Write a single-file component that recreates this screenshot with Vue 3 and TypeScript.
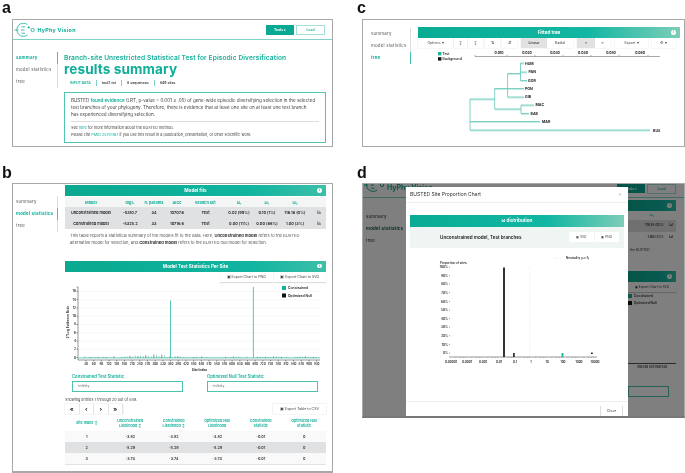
<template>
  <div class="figure">
    <!-- a: summary page -->
    <section class="cell">
      <h2 class="letter top">a</h2>
      <div class="panel panel-a">
        <header class="site-head">
          <svg class="logo" viewBox="13 22 23 14">
            <path d="M26.5 23.6A6.6 6.6 0 1 0 26.5 34" />
            <path d="M13.5 29H17.5M20.5 25.8H24M20 29H23.5M20.5 32.2H24M26.5 26.4H29M27.7 25.2V27.6" />
            <circle cx="31.6" cy="29" r="1.7" />
          </svg>
          <span class="brand">HyPhy Vision</span>
          <button class="btn-tools">Tools ▾</button>
          <button class="btn-load">Load</button>
        </header>
        <div class="page-body">
          <ul class="nav nav-a">
            <li v-for="(item, i) in navItems" :key="item" :class="{ active: i === 0 }">{{ item }}</li>
          </ul>
          <div class="summary">
            <div class="subtitle">Branch-site Unrestricted Statistical Test for Episodic Diversification</div>
            <div class="results-title">results summary</div>
            <div class="input-row">
              <span class="input-key">INPUT DATA</span>
              <span>test2.txt</span>
              <span>8 sequences</span>
              <span>849 sites</span>
            </div>
            <div class="evidence">
              <p class="evidence-main">
                BUSTED <b>found evidence</b> (LRT, p-value = 0.001 ≤ .05) of gene-wide episodic diversifying selection in the selected<br />
                test branches of your phylogeny. Therefore, there is evidence that at least one site on at least one test branch<br />
                has experienced diversifying selection.
              </p>
              <p class="evidence-note">
                See <i>here</i> for more information about the BUSTED method.<br />
                Please cite <i>PMID 25701167</i> if you use this result in a publication, presentation, or other scientific work.
              </p>
            </div>
          </div>
        </div>
      </div>
    </section>

    <!-- c: fitted tree -->
    <section class="cell">
      <h2 class="letter top letter-right">c</h2>
      <div class="panel panel-c">
        <ul class="nav nav-c">
          <li v-for="(item, i) in navItems" :key="item" :class="{ active: i === 2 }">{{ item }}</li>
        </ul>
        <div class="tree-main">
          <div class="bar bar-fade">Fitted tree<span class="info">i</span></div>
          <div class="toolbar">
            <button
              v-for="tool in treeTools"
              :key="tool.label + tool.w"
              :class="{ on: tool.on }"
              :style="{ width: tool.w + 'px', marginRight: tool.gap + 'px' }"
            >{{ tool.label }}</button>
          </div>
          <svg class="tree" viewBox="418 48 262 92">
            <rect x="438" y="52" width="3.4" height="3.4" fill="#1db5a0" />
            <rect x="438" y="57.2" width="3.4" height="3.4" fill="#111" />
            <text x="442.5" y="55.2" class="tree-small">Test</text>
            <text x="442.5" y="60.4" class="tree-small">Background</text>
            <path d="M475 55V56.5H660" class="tree-axis" />
            <g v-for="t in treeAxis" :key="t.label">
              <path :d="`M${t.x} 55V56.5`" class="tree-axis" />
              <text :x="t.x - 8" y="54" text-anchor="middle" class="tree-tick">{{ t.label }}</text>
            </g>
            <path v-for="b in treeBranches" :key="b" :d="b" class="branch-pale" />
            <path v-for="b in treeBranches" :key="'t' + b" :d="b" class="branch" />
            <path d="M470 99V130M494.7 88.5V109M507.6 73.5V97M520.5 63V80.5M521 105V113.5" class="branch" />
            <text v-for="l in treeLeaves" :key="l.name" :x="l.x" :y="l.y" class="leaf">{{ l.name }}</text>
          </svg>
        </div>
      </div>
    </section>

    <!-- b: model statistics -->
    <section class="cell">
      <h2 class="letter low">b</h2>
      <div class="panel panel-b">
        <ul class="nav nav-b">
          <li v-for="(item, i) in navItems" :key="item" :class="{ active: i === 1 }">{{ item }}</li>
        </ul>
        <div class="stats">
          <div class="bar">Model fits<span class="info">i</span></div>
          <table class="fit">
            <colgroup>
              <col v-for="w in fitWidths" :key="w.id" :style="{ width: w.px + 'px' }" />
            </colgroup>
            <thead>
              <tr><th v-for="h in fitHead" :key="h">{{ h }}</th><th></th></tr>
            </thead>
            <tbody>
              <tr v-for="row in fitRows" :key="row[0]">
                <td v-for="(c, i) in row" :key="i">{{ c }}</td>
                <td><svg class="mini" viewBox="0 0 6 5"><path d="M.5 0V4.5H6M2 3.8V2M3.5 3.8V1M5 3.8V2.5" /></svg></td>
              </tr>
            </tbody>
          </table>
          <p class="fit-note">
            This table reports a statistical summary of the models fit to the data. Here, <b>Unconstrained model</b> refers to the BUSTED<br />
            alternative model for selection, and <b>Constrained model</b> refers to the BUSTED null model for selection.
          </p>
          <div class="bar bar-second">Model Test Statistics Per Site<span class="info">i</span></div>
          <div class="export-row">
            <button>▣ Export Chart to PNG</button>
            <button>▣ Export Chart to SVG</button>
          </div>
          <svg class="site-chart" viewBox="65 283 261 90">
            <line v-for="t in yTicks" :key="t.label" x1="79" x2="320" :y1="t.y" :y2="t.y" class="grid-line" />
            <path d="M76.5 287H78V360H320" class="chart-axis" />
            <g v-for="t in yTicks" :key="'l' + t.label">
              <path :d="`M76.5 ${t.y}H78`" class="chart-axis" />
              <text x="76" :y="t.y + 1" text-anchor="end" class="chart-tick">{{ t.label }}</text>
            </g>
            <text x="0" y="0" transform="translate(69 322) rotate(-90)" text-anchor="middle" class="chart-tick">2*Log Evidence Ratio</text>
            <rect x="78" y="357.2" width="242" height="1.3" fill="#8ed8cb" />
            <path v-for="n in noiseBars" :key="n.x" :d="`M${n.x} 358V${n.top}`" :stroke="n.dark ? '#222' : '#18ab97'" stroke-width=".5" />
            <path d="M170.5 358V300.5M253.4 358V287" class="big-bar" />
            <rect x="282" y="286" width="4" height="4" fill="#18b19c" />
            <rect x="282" y="293.5" width="4" height="4" fill="#111" />
            <text x="288" y="289" class="chart-legend">Constrained</text>
            <text x="288" y="296.5" class="chart-legend">Optimized Null</text>
            <g v-for="t in xTicks" :key="t.label">
              <path :d="`M${t.x} 360V361.5`" class="chart-axis" />
              <text :x="t.x" y="365" text-anchor="middle" class="chart-tick x-label">{{ t.label }}</text>
            </g>
            <text x="199.5" y="371" text-anchor="middle" class="chart-tick strong">Site Index</text>
          </svg>
          <div class="stat-inputs">
            <label>Constrained Test Statistic<span class="field">-infinity</span></label>
            <label>Optimized Null Test Statistic<span class="field">-infinity</span></label>
          </div>
          <div class="entries">Showing entries 1 through 20 out of 849.</div>
          <div class="pager-row">
            <div class="pager">
              <button>«</button><button>‹</button><button>›</button><button>»</button>
            </div>
            <button class="csv">▣ Export Table to CSV</button>
          </div>
          <table class="sites">
            <thead>
              <tr><th v-for="h in siteHead" :key="h">{{ h }}</th></tr>
            </thead>
            <tbody>
              <tr v-for="row in siteRows" :key="row[0]">
                <td v-for="(c, i) in row" :key="i">{{ c }}</td>
              </tr>
            </tbody>
          </table>
        </div>
      </div>
    </section>

    <!-- d: site proportion modal -->
    <section class="cell">
      <h2 class="letter low letter-right">d</h2>
      <div class="panel panel-d">
        <div class="under">
          <header class="under-head">
            <svg class="logo-d" viewBox="13 22 23 14">
              <path d="M26.5 23.6A6.6 6.6 0 1 0 26.5 34" />
              <path d="M13.5 29H17.5M20.5 25.8H24M20 29H23.5M20.5 32.2H24M26.5 26.4H29M27.7 25.2V27.6" />
              <circle cx="31.6" cy="29" r="1.7" />
            </svg>
            <span class="brand-d">HyPhy Vision</span>
            <button class="btn-tools">Tools ▾</button>
            <button class="btn-load">Load</button>
          </header>
          <div class="under-body">
            <ul class="nav nav-d">
              <li v-for="(item, i) in navItems" :key="item" :class="{ active: i === 1 }">{{ item }}</li>
            </ul>
            <div class="under-right">
              <div class="bar"><span class="info">i</span></div>
              <div class="under-omega">ω₃</div>
              <div class="under-row grey">116.18 (0%) <span>lal</span></div>
              <div class="under-row">1.00 (3%) <span>lal</span></div>
              <div class="under-text">the BUSTED</div>
              <div class="bar under-second"><span class="info">i</span></div>
              <div class="under-export">▣ Export Chart to SVG</div>
              <div class="under-legend"><i></i>Constrained</div>
              <div class="under-legend"><i class="dark"></i>Optimized Null</div>
              <div class="under-axis">810 840 870 900 930</div>
              <div class="under-field"></div>
            </div>
          </div>
        </div>
        <div class="backdrop"></div>
        <div class="modal">
          <div class="modal-head">BUSTED Site Proportion Chart<span class="close-x">×</span></div>
          <div class="bar bar-fade modal-bar">ω distribution</div>
          <div class="modal-strip">
            <span>Unconstrained model, Test branches</span>
            <div class="strip-btns">
              <button>▣ SVG</button>
              <button>▣ PNG</button>
            </div>
          </div>
          <svg class="omega-chart" viewBox="410 247 214 153">
            <path d="M529.7 266V356" class="neutral" />
            <path d="M555 257H562" class="neutral" />
            <text x="566" y="258.4" class="omega-text">Neutrality (ω=1)</text>
            <text x="440" y="262.6" class="omega-text">Proportion of sites</text>
            <g v-for="t in percentTicks" :key="t.label">
              <text x="448" :y="t.y + 1.2" text-anchor="end" class="omega-text">{{ t.label }}</text>
              <path :d="`M449 ${t.y}H450`" class="omega-axis" />
            </g>
            <path d="M449 356H597" class="omega-axis" />
            <path v-for="x in minorTicks" :key="x" :d="`M${x} 356V357`" class="omega-axis thin" />
            <text v-for="t in logTicks" :key="t.label" :x="t.x" y="361.8" text-anchor="middle" class="omega-text">{{ t.label }}</text>
            <rect x="503" y="266.5" width="2" height="89.5" fill="#333" />
            <rect x="513" y="352" width="1.8" height="4" fill="#333" />
            <rect x="561.6" y="352" width="1.8" height="4" fill="#13b09b" />
            <rect x="591" y="351.6" width="1.8" height="1.4" fill="#222" />
          </svg>
          <div class="modal-foot"><button>Close</button></div>
        </div>
      </div>
    </section>
  </div>
</template>

<script setup lang="ts">
interface Tick {
  label: string;
  x: number;
}

const navItems = ['summary', 'model statistics', 'tree'];

const treeTools = [
  { label: 'Options ▾', w: 35, gap: 1 },
  { label: '↕', w: 13, gap: 1 },
  { label: '↕', w: 15, gap: 2 },
  { label: '⇅', w: 15, gap: 2 },
  { label: '⇵', w: 15, gap: 4 },
  { label: 'Linear', w: 26, gap: 0, on: true },
  { label: 'Radial', w: 26, gap: 4 },
  { label: '≡', w: 18, gap: 0, on: true },
  { label: '≡', w: 15, gap: 5 },
  { label: 'Export ▾', w: 33, gap: 4 },
  { label: '⚙ ▾', w: 24, gap: 0 },
];

const treeAxis: Tick[] = [
  { label: '0.010', x: 507 },
  { label: '0.020', x: 535 },
  { label: '0.030', x: 563 },
  { label: '0.040', x: 591 },
  { label: '0.050', x: 619 },
  { label: '0.060', x: 648 },
];

const treeBranches = [
  'M470 99H494.7',
  'M470 121.5H540',
  'M470 130H650',
  'M494.7 88.5H507.6',
  'M494.7 109H521',
  'M507.6 73.5H520.5',
  'M507.6 88.5H524',
  'M507.6 97H524',
  'M520.5 63H524',
  'M520.5 72H527',
  'M520.5 80.5H527',
  'M521 105H534',
  'M521 113.5H529',
];

const treeLeaves = [
  { name: 'HUM', x: 525, y: 64.8 },
  { name: 'PAN', x: 528.5, y: 73.3 },
  { name: 'GOR', x: 528, y: 81.8 },
  { name: 'PON', x: 525, y: 89.8 },
  { name: 'GIB', x: 525, y: 98.3 },
  { name: 'MAC', x: 535.5, y: 106.3 },
  { name: 'BAB', x: 530.5, y: 114.8 },
  { name: 'MAR', x: 542, y: 123.3 },
  { name: 'BUS', x: 653, y: 131.5 },
];

const fitWidths = [52, 26, 22, 24, 33, 34, 22, 34, 14].map((px, id) => ({ id, px }));
const fitHead = ['Model', 'log L', 'n. params', 'AICc', 'Branch set', 'ω₁', 'ω₂', 'ω₃'];
const fitRows = [
  ['Unconstrained model', '-5310.7', '34', '10707.6', 'Test', '0.02 (99%)', '0.10 (1%)', '116.18 (0%)'],
  ['Constrained model', '-5325.2', '33', '10716.6', 'Test', '0.00 (11%)', '0.00 (86%)', '1.00 (3%)'],
];

const yTicks = [16, 14, 12, 10, 8, 6, 4, 2, 0].map((v) => ({
  label: String(v),
  y: 357.5 - v * 4.13,
}));

const xTicks: Tick[] = Array.from({ length: 31 }, (_, i) => ({
  label: String((i + 1) * 30),
  x: 86 + i * 7.69,
}));

// small spikes along the baseline, fixed so that every run draws the same chart
const noiseBars = Array.from({ length: 90 }, (_, i) => {
  const wave = Math.abs(Math.sin(i * 12.9898) * 43758.5453) % 1;
  const x = Math.round((82 + i * 2.66) * 10) / 10;
  const tall = x > 126 && x < 176 ? 3.4 : 1.8;
  return { x, top: 358 - wave * tall, dark: i % 3 === 0 };
});

const siteHead = [
  'Site Index ↕',
  'Unconstrained Likelihood ↕',
  'Constrained Likelihood ↕',
  'Optimized Null Likelihood',
  'Constrained Statistic',
  'Optimized Null Statistic',
];
const siteRows = [
  ['1', '-3.82', '-3.82', '-3.82', '-0.01', '0'],
  ['2', '-5.29', '-5.29', '-5.29', '-0.01', '0'],
  ['3', '-3.74', '-3.74', '-3.74', '-0.01', '0'],
];

const percentTicks = [100, 90, 80, 70, 60, 50, 40, 30, 20, 10, 0].map((v) => ({
  label: v + '%',
  y: 352 - v * 0.86,
}));

const logTicks: Tick[] = ['0.00001', '0.0001', '0.001', '0.01', '0.1', '1', '10', '100', '1000', '10000'].map(
  (label, i) => ({ label, x: 451 + i * 16 }),
);

const minorTicks = Array.from({ length: 9 }, (_, d) => d)
  .flatMap((d) => [0.3, 0.48, 0.6, 0.7, 0.78, 0.85, 0.9, 0.95].map((f) => 451 + (d + f) * 16))
  .filter((_, i) => i % 2 === 0);
</script>

<style>
html,
body {
  margin: 0;
  background: #fff;
}
</style>

<style scoped>
.figure {
  width: 685px;
  height: 473px;
  display: grid;
  grid-template-columns: 333px 352px;
  grid-template-rows: 147px 326px;
  overflow: hidden;
  font-family: Inter, "Liberation Sans", sans-serif;
  color: #333;
  background: #fff;
  filter: blur(0.4px);
}
.cell {
  display: flex;
  flex-direction: column;
  min-width: 0;
}
.letter {
  margin: 0;
  font: bold 16px/1 "Liberation Sans", Arial, sans-serif;
  color: #111;
  display: flex;
  align-items: flex-end;
  padding-left: 2px;
}
.letter.top {
  height: 19px;
  padding-bottom: 3px;
  box-sizing: border-box;
}
.letter.low {
  height: 36px;
  padding-bottom: 2px;
  box-sizing: border-box;
}
.letter-right {
  padding-left: 24px;
}
.panel {
  box-sizing: border-box;
  border: 1px solid #a8a8a8;
  background: #fff;
  overflow: hidden;
  position: relative;
  margin-left: 12px;
}
.panel-a {
  height: 128px;
}
.panel-c {
  height: 128px;
  margin-left: 29px;
  display: flex;
  padding-top: 7px;
}
.panel-b {
  height: 290px;
  display: flex;
  border-bottom-width: 2px;
}
.panel-d {
  height: 235px;
  margin-left: 29px;
  background: #fff;
  border-bottom: 2px solid #777;
}

/* site header */
.site-head {
  height: 19px;
  border-bottom: 1px solid #7fd2c5;
  display: flex;
  align-items: center;
  padding: 0 7px 0 1px;
}
.logo,
.logo-d {
  width: 23px;
  height: 14px;
  fill: none;
  stroke: #13ae99;
  stroke-width: 0.8;
}
.brand {
  font-size: 5.4px;
  font-weight: 700;
  color: #13ae99;
  letter-spacing: 0.25px;
  margin-right: auto;
  margin-left: 0.5px;
}
button {
  font-family: inherit;
  padding: 0;
  border: 0;
  background: #fff;
  color: #444;
  font-size: 3.4px;
  cursor: pointer;
}
.btn-tools {
  width: 28px;
  height: 10px;
  background: #09a892;
  color: #fff;
  font-weight: 700;
  margin-right: 2px;
}
.btn-load {
  width: 29px;
  height: 10px;
  border: 1px solid #a5e0d6;
  color: #13ae99;
  font-weight: 600;
  box-sizing: border-box;
}

/* side navigation */
.nav {
  list-style: none;
  margin: 0;
  padding: 0;
  flex: none;
  font-size: 4.35px;
  letter-spacing: 0.22px;
  color: #555;
}
.nav li {
  height: 12px;
  line-height: 12px;
  padding-left: 3px;
  border-right: 1px solid #ddd;
  white-space: nowrap;
}
.nav li.active {
  color: #0fae98;
  font-weight: 700;
  border-right-color: #43c1ad;
}
.nav-a {
  width: 45px;
  margin-top: 12px;
}
.nav-b {
  width: 45px;
  margin-top: 12px;
}
.nav-c {
  width: 48px;
  padding-left: 5px;
  box-sizing: border-box;
  margin-top: 1px;
}
.nav-d {
  width: 40px;
  margin-top: 13px;
  color: #222;
}
.nav-d li {
  border-right: 0;
}
.nav-d li.active {
  color: #0a5a4e;
}

/* panel a */
.page-body {
  display: flex;
}
.summary {
  margin-left: 6px;
  width: 262px;
  padding-top: 14px;
}
.subtitle {
  font-size: 6.6px;
  line-height: 8px;
  font-weight: 600;
  color: #16b09b;
  letter-spacing: 0.11px;
  white-space: nowrap;
}
.results-title {
  font-size: 13.6px;
  line-height: 14px;
  font-weight: 700;
  color: #0fae98;
  letter-spacing: 0.1px;
}
.input-row {
  display: flex;
  margin-top: 4px;
  padding-left: 6px;
  font-size: 3.5px;
  line-height: 6px;
  font-weight: 600;
  color: #333;
}
.input-row span {
  padding-right: 5px;
  margin-right: 5px;
  border-right: 1px solid #7fd2c5;
}
.input-row span:last-child {
  border-right: 0;
}
.input-key {
  color: #13ae99;
}
.evidence {
  box-sizing: border-box;
  height: 51px;
  margin-top: 6px;
  border: 1px solid #53c4b2;
  padding: 5px 6px;
  font-size: 4.55px;
  color: #444;
  white-space: nowrap;
}
.evidence-main {
  margin: 0;
  line-height: 6.8px;
  padding-bottom: 2.2px;
  border-bottom: 1px solid #ddd;
}
.evidence-main b {
  color: #13ae99;
  font-weight: 600;
}
.evidence-note {
  margin: 3.5px 0 0;
  font-size: 3.75px;
  line-height: 6.8px;
}
.evidence-note i {
  color: #13ae99;
  font-style: normal;
}

/* teal bars */
.bar {
  position: relative;
  height: 11px;
  line-height: 11px;
  text-align: center;
  color: #fff;
  font-size: 4.6px;
  font-weight: 700;
  background: linear-gradient(90deg, #0aa98f 0%, #10b4a0 70%, #3cbfa9 100%);
}
.bar-fade {
  background: linear-gradient(90deg, #09ab93 0%, #12b7a3 65%, #7dcdb8 100%);
}
.info {
  position: absolute;
  right: 4px;
  top: 3px;
  width: 4.6px;
  height: 4.6px;
  border-radius: 50%;
  background: #fff;
  color: #2bb29e;
  font-size: 3.4px;
  line-height: 4.6px;
  text-align: center;
}

/* panel b */
.stats {
  width: 261px;
  margin-left: 7px;
  padding-top: 1px;
}
.fit {
  width: 261px;
  table-layout: fixed;
  border-collapse: collapse;
  font-size: 3.9px;
  text-align: center;
  margin-top: 1px;
  color: #222;
}
.fit th {
  height: 10px;
  padding: 0;
  color: #13ae99;
  font-weight: 700;
  background: #f4f5f5;
}
.fit td {
  height: 11px;
  padding: 0;
  font-weight: 600;
  background: #e0e1e2;
  white-space: nowrap;
}
.mini {
  width: 4.5px;
  height: 4px;
  fill: none;
  stroke: #333;
  stroke-width: 0.6;
}
.fit-note {
  margin: 4px 0 0 5px;
  font-size: 4.1px;
  line-height: 6.8px;
  color: #555;
  white-space: nowrap;
}
.fit-note b {
  font-weight: 700;
  color: #333;
}
.bar-second {
  margin-top: 14px;
}
.export-row {
  display: flex;
  justify-content: flex-end;
  height: 10px;
}
.export-row button {
  width: 52.5px;
  height: 10px;
  margin-left: 1px;
  box-shadow: 0 1px 1px #ddd;
  font-size: 3.6px;
}
.site-chart {
  display: block;
  width: 261px;
  height: 90px;
  margin-top: 1px;
}
.grid-line {
  stroke: #f1f1f1;
  stroke-width: 0.5;
}
.chart-axis {
  fill: none;
  stroke: #333;
  stroke-width: 0.5;
}
.chart-tick {
  font-size: 3.2px;
  font-weight: 600;
  fill: #222;
}
.x-label {
  font-size: 2.9px;
}
.strong {
  font-weight: 700;
}
.big-bar {
  fill: none;
  stroke: #2ab9a5;
  stroke-width: 0.8;
}
.chart-legend {
  font-size: 3.4px;
  font-weight: 600;
  fill: #222;
}
.stat-inputs {
  display: flex;
  padding-left: 7px;
  gap: 24px;
  margin-top: 1px;
}
.stat-inputs label {
  width: 111px;
  font-size: 4.2px;
  line-height: 6px;
  font-weight: 600;
  color: #13ae99;
  white-space: nowrap;
}
.field {
  display: block;
  box-sizing: border-box;
  height: 10.5px;
  margin-top: 1.5px;
  border: 1px solid #4cc2af;
  padding-left: 4px;
  line-height: 8.5px;
  font-weight: 400;
  color: #666;
  font-size: 3.4px;
}
.entries {
  font-size: 3.75px;
  line-height: 5px;
  margin-top: 5px;
  color: #444;
}
.pager-row {
  display: flex;
  justify-content: space-between;
  margin-top: 2px;
  height: 10.5px;
}
.pager {
  display: flex;
  box-shadow: 0 0 1px #bbb;
}
.pager button {
  width: 14.5px;
  font-size: 6px;
  font-weight: 700;
  color: #222;
  border-right: 1px solid #e5e5e5;
}
.csv {
  width: 53px;
  box-shadow: 0 0 1px #bbb;
  font-size: 3.6px;
}
.sites {
  width: 261px;
  margin-top: 2.5px;
  table-layout: fixed;
  border-collapse: collapse;
  text-align: center;
  font-size: 3.7px;
  border-bottom: 1.5px solid #e3e3e3;
}
.sites th {
  height: 14px;
  padding: 0 5px;
  font-weight: 600;
  color: #13ae99;
  line-height: 4.6px;
}
.sites td {
  height: 11px;
  padding: 0;
  font-weight: 600;
  color: #333;
  background: #f9f9f9;
}
.sites tr:nth-child(2) td {
  background: #e0e1e2;
}

/* panel c */
.tree-main {
  width: 262px;
  margin-left: 7px;
}
.toolbar {
  display: flex;
  height: 10px;
}
.toolbar button {
  height: 10px;
  flex: none;
  box-shadow: 0 0 1px #ccc;
  font-size: 3.6px;
}
.toolbar button.on {
  background: #e2e2e2;
  font-weight: 600;
}
.tree {
  display: block;
  width: 262px;
  height: 92px;
}
.tree-small {
  font-size: 3.3px;
  font-weight: 600;
  fill: #222;
}
.tree-axis {
  fill: none;
  stroke: #555;
  stroke-width: 0.5;
}
.tree-tick {
  font-size: 3.3px;
  font-weight: 700;
  fill: #222;
}
.branch {
  fill: none;
  stroke: #62c7b7;
  stroke-width: 0.8;
}
.branch-pale {
  fill: none;
  stroke: #c4ebe4;
  stroke-width: 1.4;
  transform: translateY(0.8px);
}
.leaf {
  font-size: 3.6px;
  font-weight: 700;
  fill: #222;
}

/* panel d: page behind the dialog */
.under {
  height: 100%;
  font-size: 3.4px;
}
.under-head {
  height: 13px;
  display: flex;
  align-items: flex-start;
  padding-right: 8px;
  border-bottom: 1px solid #7fd2c5;
}
.logo-d {
  flex: none;
  width: 24px;
  height: 14px;
  margin-top: -6px;
  stroke-width: 1;
}
.brand-d {
  font-size: 7px;
  font-weight: 700;
  color: #13ae99;
  margin-right: auto;
  line-height: 7px;
}
.under-head .btn-tools {
  height: 9px;
}
.under-head .btn-load {
  height: 10px;
}
.under-body {
  display: flex;
  justify-content: space-between;
}
.under-right {
  width: 48px;
  margin-right: 8px;
  padding-top: 2px;
  font-weight: 600;
  text-align: center;
}
.under-omega {
  line-height: 9px;
  color: #13ae99;
}
.under-row {
  height: 11.5px;
  line-height: 11.5px;
  text-align: right;
  padding-right: 3px;
}
.under-row.grey {
  background: #e0e1e2;
}
.under-row span {
  margin-left: 5px;
}
.under-text {
  text-align: left;
  margin: 4px 0 0 2px;
  line-height: 6px;
  font-weight: 400;
}
.under-second {
  margin-top: 18px;
}
.under-export {
  height: 10px;
  line-height: 10px;
  box-shadow: 0 1px 1px #ccc;
  font-size: 3.2px;
  font-weight: 400;
}
.under-legend {
  display: flex;
  align-items: center;
  gap: 2px;
  height: 7.5px;
  font-size: 3.2px;
}
.under-legend i {
  width: 4px;
  height: 4px;
  background: #18b19c;
}
.under-legend i.dark {
  background: #111;
}
.under-axis {
  margin-top: 56px;
  border-top: 1px solid #555;
  line-height: 7px;
  font-size: 2.9px;
  white-space: nowrap;
}
.under-field {
  margin-top: 15px;
  height: 11px;
  width: 41px;
  box-sizing: border-box;
  border: 1px solid #4cc2af;
}
.backdrop {
  position: absolute;
  inset: 0;
  background: rgba(0, 0, 0, 0.5);
}

/* panel d: dialog */
.modal {
  position: absolute;
  left: 43px;
  top: 3px;
  width: 222px;
  height: 230px;
  background: #fff;
  display: flex;
  flex-direction: column;
  padding: 0 4px;
  box-sizing: border-box;
}
.modal-head {
  height: 14.5px;
  line-height: 14.5px;
  margin: 0 -4px;
  padding: 0 4px;
  border-bottom: 1px solid #eee;
  font-size: 5px;
  color: #333;
  flex: none;
  display: flex;
  justify-content: space-between;
}
.close-x {
  color: #bbb;
  font-size: 6px;
  padding-right: 2px;
}
.modal-bar {
  flex: none;
  margin-top: 12.5px;
  height: 11.5px;
  line-height: 11.5px;
}
.modal-strip {
  flex: none;
  height: 21px;
  background: #eef5f3;
  display: flex;
  align-items: center;
  justify-content: space-between;
  padding: 0 5px 0 30px;
  font-size: 4.6px;
  font-weight: 600;
  color: #222;
}
.strip-btns {
  display: flex;
  gap: 1px;
}
.strip-btns button {
  width: 24.5px;
  height: 9.5px;
  font-size: 3.2px;
  font-weight: 400;
}
.omega-chart {
  flex: none;
  display: block;
  width: 214px;
  height: 153px;
}
.omega-text {
  font-size: 3px;
  font-weight: 600;
  fill: #222;
}
.omega-axis {
  fill: none;
  stroke: #333;
  stroke-width: 0.5;
}
.thin {
  stroke-width: 0.25;
}
.neutral {
  fill: none;
  stroke: #bbb;
  stroke-width: 0.4;
  stroke-dasharray: 0.8 1.6;
}
.modal-foot {
  flex: 1;
  margin: 0 -4px;
  border-top: 1px solid #eee;
  display: flex;
  justify-content: flex-end;
  align-items: flex-start;
  padding: 4px 5px 0 0;
}
.modal-foot button {
  width: 23px;
  height: 11px;
  border-left: 1px solid #ddd;
  border-right: 1px solid #ddd;
  font-size: 3.6px;
}
</style>
